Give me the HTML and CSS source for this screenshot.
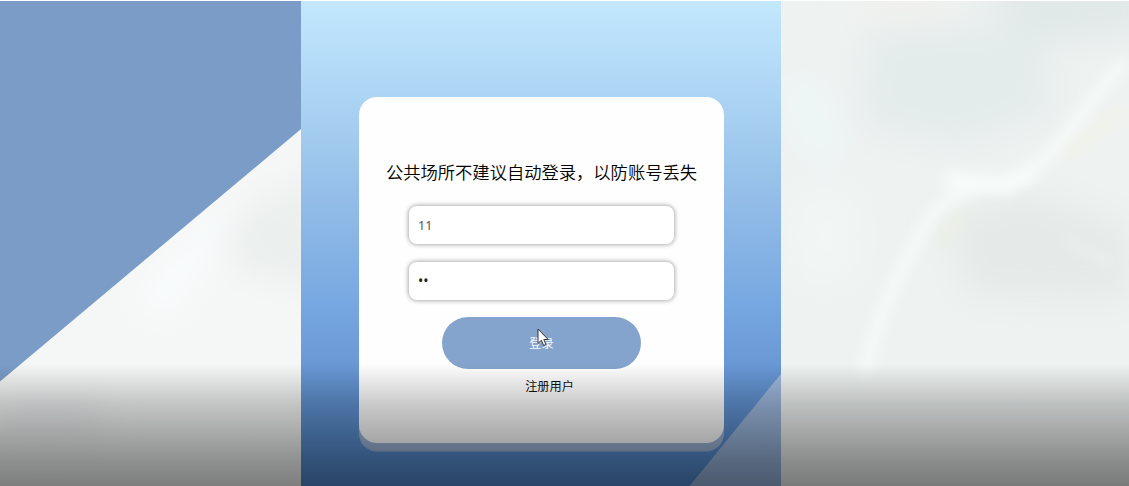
FILE: index.html
```html
<!DOCTYPE html>
<html lang="zh-CN">
<head>
    <meta charset="UTF-8">
    <meta name="viewport" content="width=device-width, initial-scale=1.0">
    <title>登录</title>
    <link rel="stylesheet" href="styles.css">
</head>
<body>
    <div class="page">
        <!-- 左侧背景 -->
        <div class="side-left">
            <svg class="texture" viewBox="0 0 301 485" preserveAspectRatio="none">
                <defs>
                    <filter id="soft-left" x="-50%" y="-50%" width="200%" height="200%"><feGaussianBlur stdDeviation="16"/></filter>
                </defs>
                <rect width="301" height="485" fill="#f5f7f6"/>
                <g filter="url(#soft-left)">
                    <path d="M215 225L320 170V290L240 270Z" fill="#ebefed"/>
                    <path d="M130 300L220 200L240 210L170 320Z" fill="#f9fcfd"/>
                    <path d="M0 395H100V440H0Z" fill="#edf0f1"/>
                </g>
                <path d="M0 0H301V128L0 380.500Z" fill="#7a9cc7"/>
            </svg>
        </div>

        <!-- 登录区域 -->
        <div class="main">
            <form class="login-card">
                <p class="tip">公共场所不建议自动登录，以防账号丢失</p>
                <input class="field" type="text" value="11">
                <input class="field" type="password" value="11">
                <button class="login-btn" type="button">登录</button>
                <a class="register" href="#">注册用户</a>
            </form>
        </div>

        <!-- 右侧背景 -->
        <div class="side-right">
            <svg class="texture" viewBox="0 0 349 485" preserveAspectRatio="none">
                <defs>
                    <filter id="soft" x="-30%" y="-30%" width="160%" height="160%"><feGaussianBlur stdDeviation="18"/></filter>
                    <filter id="line" x="-30%" y="-30%" width="160%" height="160%"><feGaussianBlur stdDeviation="6"/></filter>
                </defs>
                <rect width="349" height="485" fill="#eef2f1"/>
                <g filter="url(#soft)">
                    <path d="M90 30L260 20L275 110L180 145L80 125Z" fill="#e4ebeb"/>
                    <path d="M190 -20H370V30L260 40Z" fill="#e0e7e7"/>
                    <path d="M165 220L240 190L349 225V300L190 295Z" fill="#e5e9e7"/>
                    <path d="M0 75L40 80L65 160L30 160L0 100Z" fill="#eef7f7"/>
                    <path d="M10 190H75V280H10Z" fill="#f2f6f5"/>
                    <path d="M75 -10H170L160 10H90Z" fill="#f4f0ea"/>
                </g>
                <g filter="url(#line)" fill="none">
                    <path d="M84 375C93 325 115 275 142 230C170 175 220 195 262 160C290 135 300 110 345 60" stroke="#f5f9f8" stroke-width="13"/>
                    <path d="M157 244L182 214" stroke="#ebefe6" stroke-width="12"/>
                    <path d="M285 153L345 108" stroke="#f0f2ea" stroke-width="16"/>
                    <path d="M165 178L225 185L255 170" stroke="#f7fbfa" stroke-width="18"/>
                    <path d="M285 240L330 262" stroke="#ecf1f0" stroke-width="7"/>
                </g>
            </svg>
        </div>

        <!-- 底部阴影 -->
        <div class="bottom-shade"></div>

        <svg class="cursor" viewBox="0 0 12 19">
            <path d="M1 1V15.500L4.400 12.300L6.600 17.500L9 16.500L6.800 11.500H11.200Z" fill="#fff" stroke="#333" stroke-width="1"/>
        </svg>
    </div>
</body>
</html>
```
FILE: styles.css
```css
* { margin: 0; padding: 0; box-sizing: border-box; }
body { font-family: "Noto Sans", "Noto Sans CJK SC", sans-serif; background-color: #fff; color: #111; overflow: hidden; }

.page { position: relative; display: flex; height: 100vh; padding-top: 1px; }
.side-left { width: 301px; flex-shrink: 0; }
.side-right { flex: 1; }
.texture { display: block; width: 100%; height: 100%; }

.main {
    width: 480px;
    flex-shrink: 0;
    display: flex;
    flex-direction: column;
    align-items: center;
    padding-top: 96px;
    background-image:
        linear-gradient(to bottom right, transparent 50%, rgba(205, 212, 228, 0.54) 50.7%),
        linear-gradient(#c3e8fe 0%, #add5f4 19%, #93bde8 41%, #78a8e1 62%, #6998d5 75%, #5088cb 100%);
    background-size: 92px 113px, 100% 100%;
    background-position: right bottom, 0 0;
    background-repeat: no-repeat;
}

.login-card {
    width: 365px;
    height: 346px;
    display: flex;
    flex-direction: column;
    align-items: center;
    padding-top: 63px;
    margin-left: 1px;
    background-color: #fefefe;
    border-radius: 18px;
    box-shadow: 0 8.5px 0 rgba(215, 215, 222, 0.54);
}
.tip { font-size: 17.3px; font-weight: 350; line-height: 26px; white-space: nowrap; margin-bottom: 20px; color: #000; }
.field {
    width: 265px;
    height: 38px;
    flex-shrink: 0;
    margin-bottom: 17.5px;
    padding: 0 9px;
    border: none;
    border-radius: 8px;
    outline: none;
    background-color: #fff;
    box-shadow: 0 0 4px 1px rgba(0, 0, 0, 0.32);
    font-family: "Noto Sans", sans-serif;
    font-size: 12.5px;
    color: #555;
}
.field[type="password"] { font-size: 14px; color: #222; }
.login-btn {
    width: 199px;
    height: 52px;
    flex-shrink: 0;
    border: none;
    border-radius: 26px;
    background-color: #84a4cd;
    color: #f4faff;
    font-family: inherit;
    font-size: 12.2px;
}
.register { margin: 9px 0 0 16px; font-size: 12.2px; line-height: 18px; color: #111; text-decoration: none; }

.bottom-shade {
    position: absolute;
    left: 0;
    right: 0;
    bottom: 0;
    height: 122px;
    background-image: linear-gradient(rgba(0, 0, 0, 0), rgba(0, 0, 0, 0.06) 9%, rgba(0, 0, 0, 0.2) 32%, rgba(0, 0, 0, 0.33) 60%, rgba(0, 0, 0, 0.42) 80%, rgba(0, 0, 0, 0.49));
    pointer-events: none;
}
.cursor { position: absolute; left: 537px; top: 328px; width: 12px; height: 19px; }
```
